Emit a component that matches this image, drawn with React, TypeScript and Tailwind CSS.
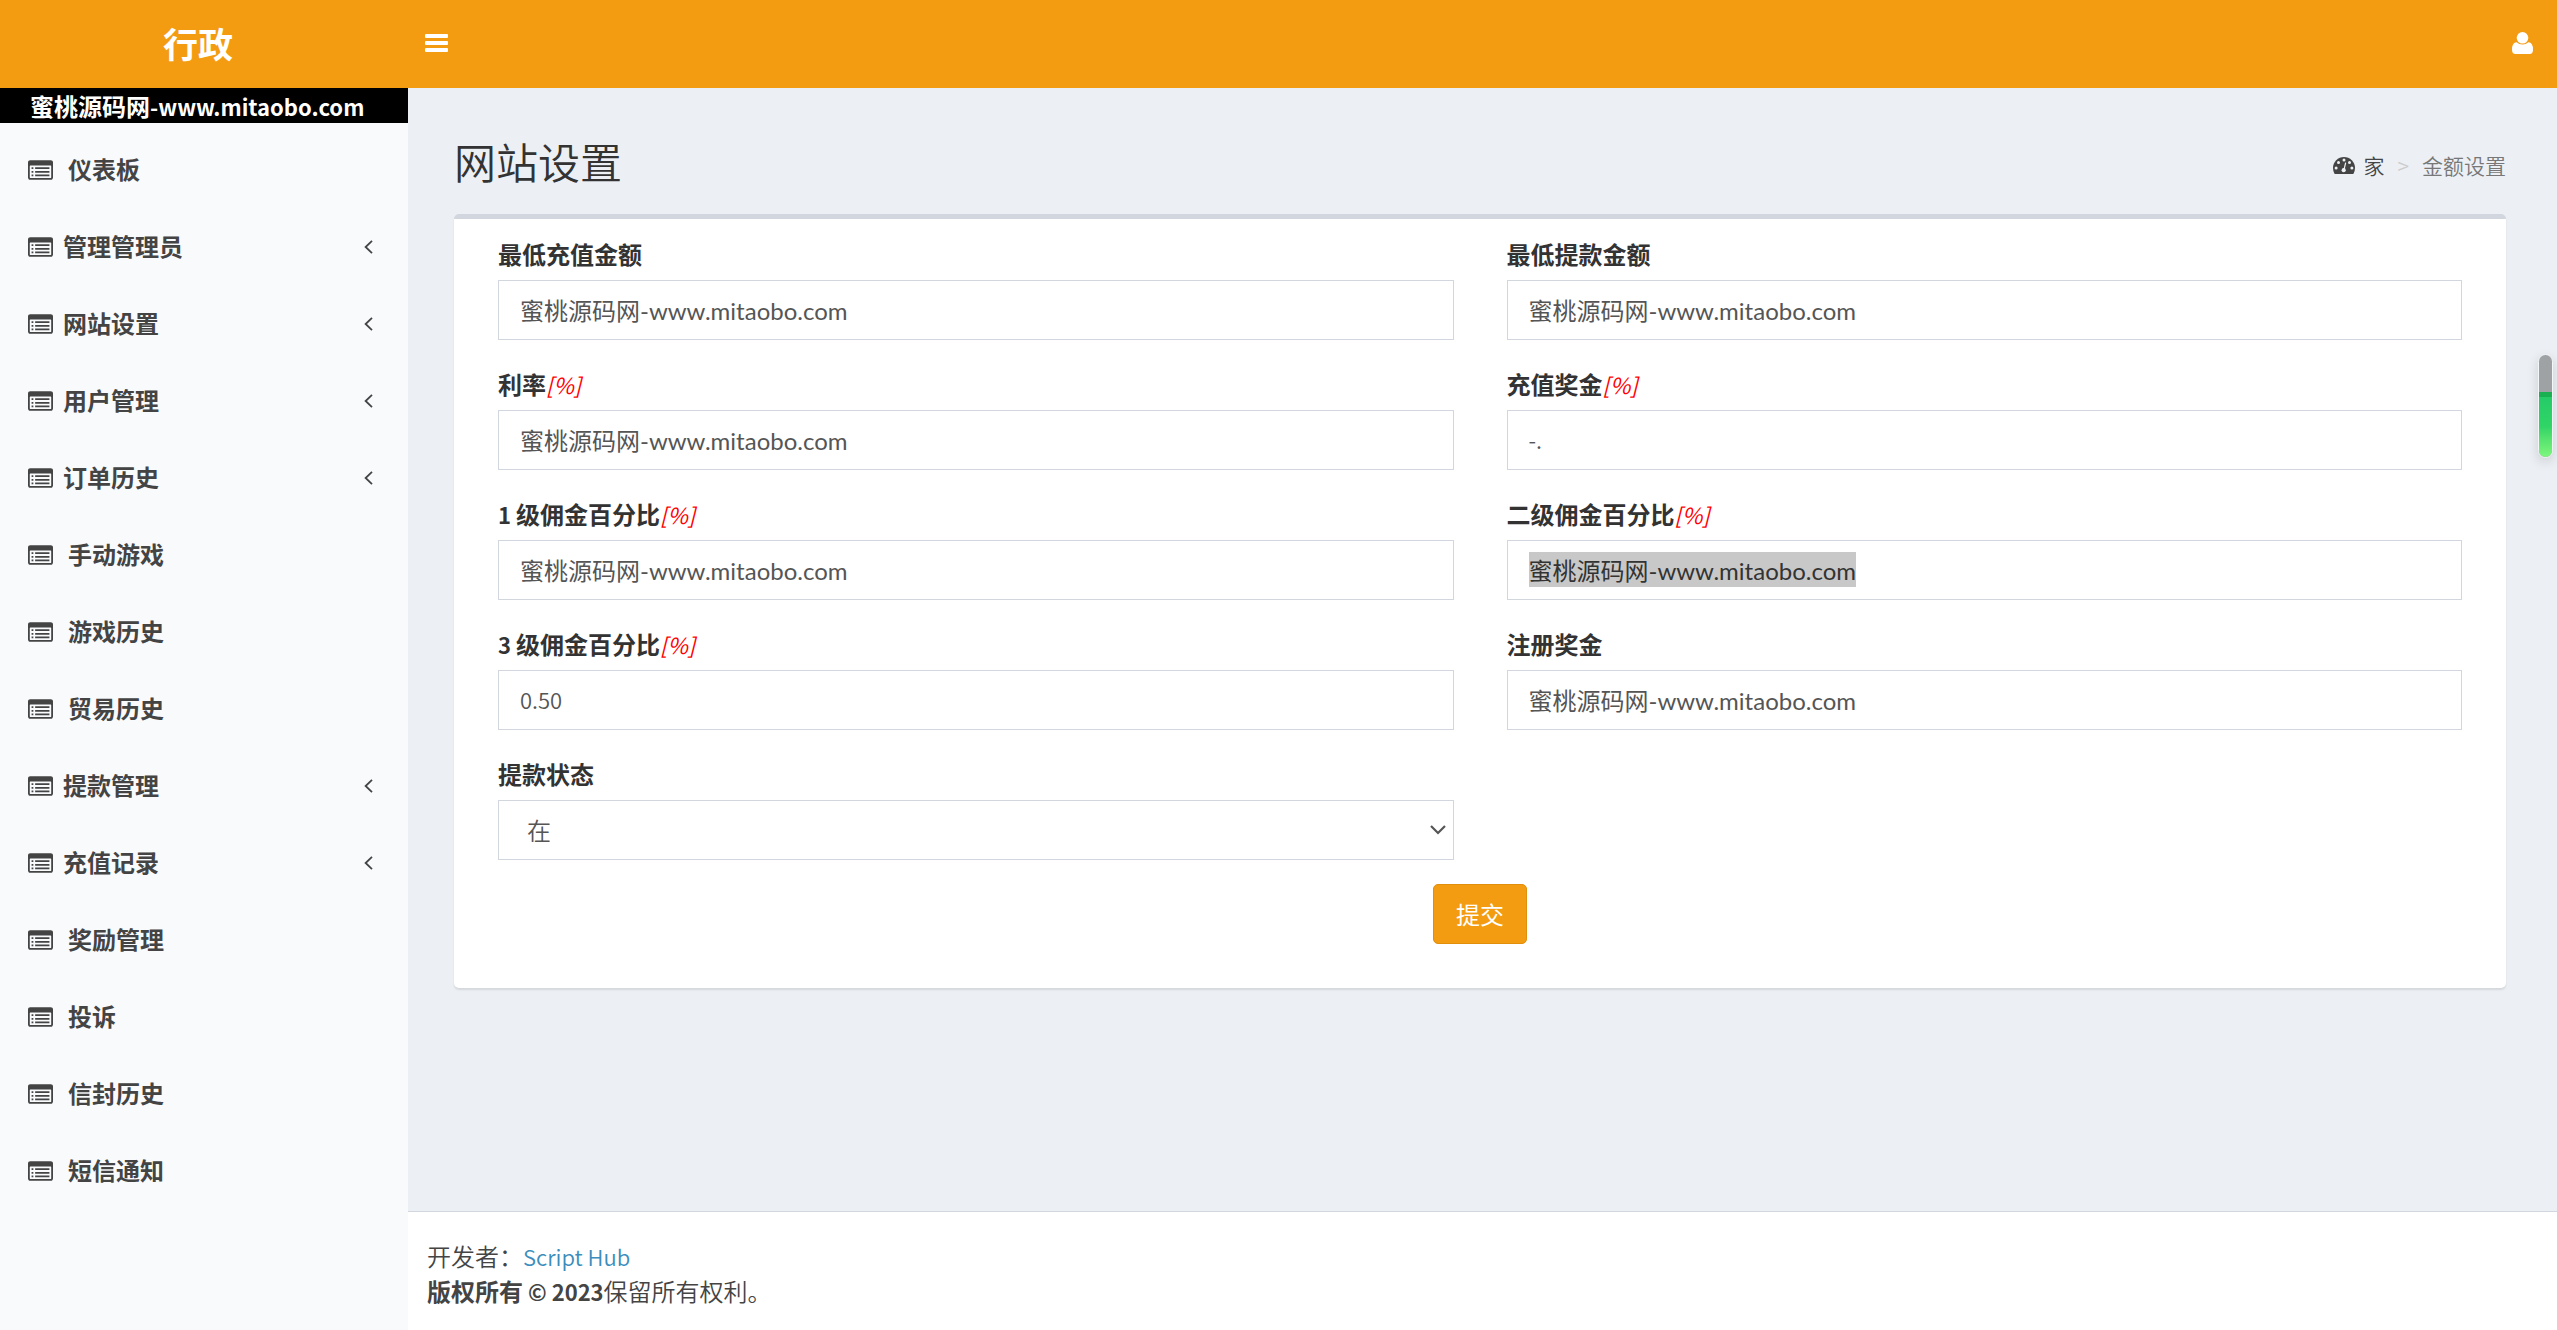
import React, { useEffect, useRef } from 'react';
import clsx from 'clsx';

interface MenuItem {
  label: string;
  expandable?: boolean;
}

interface Field {
  id: string;
  prefix?: string;
  label: string;
  percent?: boolean;
  value: string;
  selected?: boolean;
}

const SITE = '蜜桃源码网-www.mitaobo.com';

const menuItems: MenuItem[] = [
  { label: '仪表板' },
  { label: '管理管理员', expandable: true },
  { label: '网站设置', expandable: true },
  { label: '用户管理', expandable: true },
  { label: '订单历史', expandable: true },
  { label: '手动游戏' },
  { label: '游戏历史' },
  { label: '贸易历史' },
  { label: '提款管理', expandable: true },
  { label: '充值记录', expandable: true },
  { label: '奖励管理' },
  { label: '投诉' },
  { label: '信封历史' },
  { label: '短信通知' },
];

const fields: Field[] = [
  { id: 'minRecharge', label: '最低充值金额', value: SITE },
  { id: 'minWithdraw', label: '最低提款金额', value: SITE },
  { id: 'interest', label: '利率', percent: true, value: SITE },
  { id: 'rechargeBonus', label: '充值奖金', percent: true, value: '-.' },
  { id: 'level1', prefix: '1', label: '级佣金百分比', percent: true, value: SITE },
  { id: 'level2', label: '二级佣金百分比', percent: true, value: SITE, selected: true },
  { id: 'level3', prefix: '3', label: '级佣金百分比', percent: true, value: '0.50' },
  { id: 'signupBonus', label: '注册奖金', value: SITE },
];

function ListIcon() {
  return (
    <svg viewBox="0 128 1792 1408" className="h-5 w-[25px] shrink-0" fill="currentColor" aria-hidden="true">
      <path
        fillRule="evenodd"
        d="M160 128h1472q66 0 113 47t47 113v1088q0 66-47 113t-113 47h-1472q-66 0-113-47t-47-113v-1088q0-66 47-113t113-47zM160 512q-32 0-32 32v832q0 32 32 32h1472q32 0 32-32v-832q0-32-32-32z"
      />
      <path d="M256 640h128v128h-128zM256 896h128v128h-128zM256 1152h128v128h-128zM512 640h1024v128h-1024zM512 896h1024v128h-1024zM512 1152h1024v128h-1024z" />
    </svg>
  );
}

function AngleLeftIcon() {
  return (
    <svg viewBox="0 0 9 14" className="h-[14px] w-[9px]" fill="none" stroke="currentColor" strokeWidth="1.8" aria-hidden="true">
      <path d="M8 0.8L1.6 7L8 13.2" />
    </svg>
  );
}

function BarsIcon() {
  return (
    <svg viewBox="0 0 23 18" className="h-[18px] w-[23px]" fill="currentColor" aria-hidden="true">
      <rect width="23" height="4" rx="1" />
      <rect y="7" width="23" height="4" rx="1" />
      <rect y="14" width="23" height="4" rx="1" />
    </svg>
  );
}

function UserIcon() {
  return (
    <svg viewBox="0 0 21 22" className="h-[22px] w-[21px]" fill="currentColor" aria-hidden="true">
      <circle cx="10.5" cy="5.8" r="5.8" />
      <path d="M4.6 10.2Q7 12.6 10.5 12.6T16.4 10.2Q21 10.2 21 17.8Q21 22 17.6 22H3.4Q0 22 0 17.8Q0 10.2 4.6 10.2Z" />
    </svg>
  );
}

function DashboardIcon() {
  return (
    <svg viewBox="0 0 22 17" className="h-[17px] w-[22px]" aria-hidden="true">
      <path d="M11 0A11 11 0 0 1 22 11Q22 14 20.6 16.4Q20.2 17 19.6 17H2.4Q1.8 17 1.4 16.4Q0 14 0 11A11 11 0 0 1 11 0Z" fill="#444" />
      <g fill="#ecf0f5">
        <circle cx="3.1" cy="11" r="1.5" />
        <circle cx="5.5" cy="5.4" r="1.5" />
        <circle cx="11" cy="3.1" r="1.5" />
        <circle cx="16.5" cy="5.4" r="1.5" />
        <circle cx="18.9" cy="11" r="1.5" />
        <circle cx="10.7" cy="13.2" r="2.1" />
      </g>
      <path d="M12.6 6L11 12.6" stroke="#ecf0f5" strokeWidth="1.2" strokeLinecap="round" />
    </svg>
  );
}

function FieldLabel({ field }: { field: Field }) {
  return (
    <label htmlFor={field.id} className="block font-bold text-[#333]">
      {field.prefix && <span className="text-[22px] leading-none">{field.prefix} </span>}
      {field.label}
      {field.percent && <em className="text-[22px] leading-none font-normal text-[#f00]">[%]</em>}
    </label>
  );
}

export default function App() {
  const selectedRef = useRef<HTMLInputElement>(null);

  useEffect(() => {
    selectedRef.current?.focus();
    selectedRef.current?.select();
  }, []);

  return (
    <div className="flex min-h-screen flex-col bg-[#ecf0f5] font-['Noto_Sans_CJK_SC',sans-serif] text-[24px] leading-[35px] font-[350] text-[#444]">
      <header className="flex h-[88px] bg-[#f39c12] pb-[2px] text-white">
        <a href="#" className="flex w-[408px] items-center justify-center pr-3 pb-[2px] text-[35px] font-bold">
          行政
        </a>
        <div className="flex flex-1 items-center justify-between pr-6 pl-[17px]">
          <button type="button" aria-label="菜单">
            <BarsIcon />
          </button>
          <a href="#" aria-label="用户">
            <UserIcon />
          </a>
        </div>
      </header>

      <div className="flex flex-1">
        <aside className="w-[408px] shrink-0 bg-[#f9fafc]">
          <div className="bg-black px-[30px] font-bold whitespace-nowrap text-white">
            蜜桃源码网<span className="text-[22px] leading-none">-www.mitaobo.com</span>
          </div>
          <nav className="pt-[8px]">
            <ul>
              {menuItems.map((item) => (
                <li key={item.label}>
                  <a
                    href="#"
                    className={clsx(
                      'flex h-[77px] items-center pr-[35px] pl-7 font-bold',
                      item.expandable ? 'gap-[10px]' : 'gap-[15px]'
                    )}
                  >
                    <ListIcon />
                    <span className="flex-1 pb-[2px]">{item.label}</span>
                    {item.expandable && <AngleLeftIcon />}
                  </a>
                </li>
              ))}
            </ul>
          </nav>
        </aside>

        <div className="flex min-w-0 flex-1 flex-col">
          <main className="flex-1 pr-[51px] pl-[46px]">
            <section className="flex items-center justify-between pt-12">
              <h1 className="text-[42px] leading-[50px] text-[#333]">网站设置</h1>
              <ol className="flex items-center pt-2 text-[21px] leading-[30px]">
                <li>
                  <a href="#" className="flex items-center gap-2">
                    <DashboardIcon />家
                  </a>
                </li>
                <li className="px-[13px] text-[#ccc]">&gt;</li>
                <li className="text-[#777]">金额设置</li>
              </ol>
            </section>

            <section className="mt-7 rounded-[5px] border-t-[5px] border-[#d2d6de] bg-white px-11 pt-[17px] pb-11 shadow-[0_2px_2px_rgba(0,0,0,0.1)]">
              <form onSubmit={(e) => e.preventDefault()}>
                <div className="grid grid-cols-2 gap-x-[53px] gap-y-[26px]">
                  {fields.map((field) => (
                    <div key={field.id}>
                      <FieldLabel field={field} />
                      <input
                        id={field.id}
                        ref={field.selected ? selectedRef : undefined}
                        type="text"
                        defaultValue={field.value}
                        className={clsx(
                          'mt-[9px] block h-[60px] w-full border border-[#d2d6de] bg-white px-[21px] pb-[2px] text-[#555] outline-none selection:bg-[#c8c8c8] selection:text-[#333]',
                          field.value === SITE ? "font-[Lato,'Noto_Sans_CJK_SC',sans-serif] font-normal" : 'text-[22px]'
                        )}
                      />
                    </div>
                  ))}
                  <div>
                    <label htmlFor="withdrawStatus" className="block font-bold text-[#333]">
                      提款状态
                    </label>
                    <div className="relative mt-[9px]">
                      <select
                        id="withdrawStatus"
                        className="block h-[60px] w-full appearance-none border border-[#d2d6de] bg-white px-7 pb-[2px] text-[#555] outline-none"
                      >
                        <option>在</option>
                      </select>
                      <svg
                        viewBox="0 0 16 10"
                        className="pointer-events-none absolute top-[25px] right-2 h-[10px] w-4"
                        fill="none"
                        stroke="#555"
                        strokeWidth="2.2"
                        aria-hidden="true"
                      >
                        <path d="M1 1L8 8L15 1" />
                      </svg>
                    </div>
                  </div>
                </div>
                <div className="mt-6 text-center">
                  <button
                    type="submit"
                    className="h-[60px] rounded-[5px] border border-[#e08e0b] bg-[#f39c12] px-[22px] pb-[2px] align-top font-normal text-white"
                  >
                    提交
                  </button>
                </div>
              </form>
            </section>
          </main>

          <footer className="border-t border-[#d2d6de] bg-white px-[19px] pt-[26px] pb-[22px]">
            <div>
              开发者：
              <a href="#" className="text-[22px] leading-none text-[#3c8dbc]">
                Script Hub
              </a>
            </div>
            <div>
              <strong>
                版权所有<span className="text-[22px] leading-none"> © 2023</span>
              </strong>
              保留所有权利。
            </div>
          </footer>
        </div>
      </div>

      {/* Floating level gauge on the right edge */}
      <div className="fixed top-[354px] right-1 flex h-[104px] w-[15px] flex-col overflow-hidden rounded-full border border-[#f4f6f8] bg-[#9fa2a5] shadow-[0_4px_12px_rgba(0,0,0,0.15)]">
        <div className="mt-[37px] h-[5px] bg-[#18b050]" />
        <div className="flex-1 bg-linear-to-b from-[#25cb68] via-[#30d566] to-[#7df77d]" />
      </div>
    </div>
  );
}
